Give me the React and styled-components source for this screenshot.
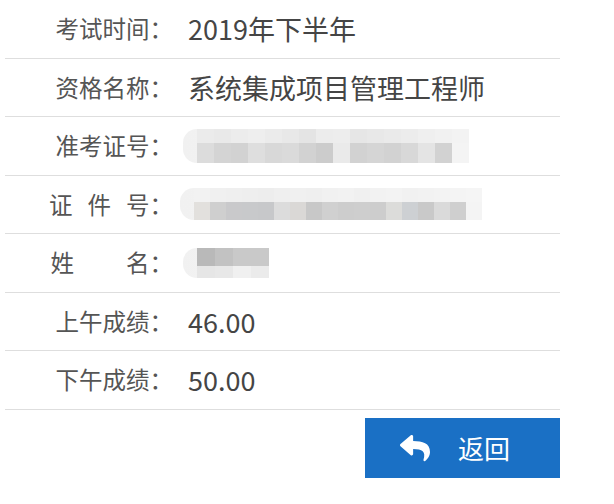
import React from "react";
import styled, { createGlobalStyle } from "styled-components";
import { FaReply } from "react-icons/fa";

const GlobalStyle = createGlobalStyle`
  html, body {
    margin: 0;
    padding: 0;
    background: #ffffff;
  }
  body {
    font-family: "Noto Sans CJK SC", "Noto Sans", sans-serif;
  }
`;

const Page = styled.div`
  width: 614px;
  height: 504px;
  box-sizing: border-box;
  padding-left: 5px;
  overflow: hidden;
`;

const Table = styled.div`
  width: 555px;
  display: flex;
  flex-direction: column;
`;

const Row = styled.div`
  display: flex;
  align-items: center;
  height: 57.5px;
  border-bottom: 1px solid #dedede;
`;

const Label = styled.div`
  width: 168px;
  flex-shrink: 0;
  font-size: 23.5px;
  color: #555555;
  white-space: nowrap;
  display: flex;
  justify-content: flex-end;
  align-items: center;
  line-height: 1;
`;

const Gap = styled.span`
  display: inline-block;
  width: ${(p) => p.$w}px;
`;

const Value = styled.div`
  padding-left: 15px;
  font-size: 27px;
  color: #454545;
  white-space: nowrap;
  line-height: 1;
`;

const Mosaic = styled.div`
  margin-left: ${(p) => p.$offset || 12}px;
  display: flex;
  flex-direction: column;
  border-radius: 14px 0 0 14px;
  overflow: hidden;
  background: linear-gradient(90deg, #f1f1f1, #f6f6f6);
  padding-left: 14px;
`;

const MosaicRow = styled.div`
  display: flex;
  height: ${(p) => p.$h}px;
`;

const Block = styled.div`
  width: ${(p) => p.$w || 16}px;
  height: 100%;
  background: ${(p) => p.$c};
`;

const Footer = styled.div`
  width: 555px;
  display: flex;
  justify-content: flex-end;
  padding-top: 8px;
`;

const BackButton = styled.button`
  width: 195px;
  height: 60px;
  border: none;
  background: #1a70c5;
  color: #ffffff;
  display: flex;
  align-items: center;
  padding: 0 0 0 33px;
  box-sizing: border-box;
  font-family: "Noto Sans CJK SC", "Noto Sans", sans-serif;
  font-size: 26px;
  cursor: pointer;
  gap: 26px;
  svg {
    width: 34px;
    height: 30px;
  }
`;

const topA = ["#ebebeb", "#e9e9e9", "#ececec", "#eeeeee", "#ebebeb", "#e8e8e8", "#e4e4e4", "#ececec", "#ededed", "#e6e6e6", "#e8e8e8", "#eaeaea", "#ececec", "#efefef", "#f1f1f1", "#f3f3f3"];
const botA = ["#dcdcdc", "#d4d4d4", "#d2d2d2", "#dedede", "#d8d8d8", "#dadada", "#d2d2d2", "#cccccc", "#eaeaea", "#d2d2d2", "#d5d5d5", "#d2d2d2", "#d8d8d8", "#e4e4e4", "#d2d2d2", "#f4f4f4"];
const topB = ["#f2f2f2", "#f0f0f0", "#efefef", "#eeeeee", "#ededed", "#efefef", "#f0f0f0", "#efefef", "#f1f1f1", "#f2f2f2", "#f0f0f0", "#f2f2f2", "#f3f3f3", "#f1f1f1", "#f2f2f2", "#f3f3f3", "#f4f4f4", "#f5f5f5"];
const botB = ["#e2e0dd", "#cfcfcf", "#c9c9cb", "#c8c9cb", "#c7c8ca", "#dcdcdc", "#dad8d6", "#c8c8c8", "#d0d0d0", "#cdcdcd", "#cecece", "#cdcdcd", "#dcdcda", "#cdd0d3", "#c9c9c9", "#dadada", "#cfcfcf", "#f4f4f4"];
const topC = ["#b9b9b9", "#c2c2c2", "#c9c9c9", "#c9c9c9"];
const botC = ["#e6e6e6", "#e8e8e8", "#f0f0f0", "#ebebeb"];

function Blur({ top, bottom, topH, botH, offset, w }) {
  return (
    <Mosaic $offset={offset}>
      <MosaicRow $h={topH}>
        {top.map((c, i) => (
          <Block key={i} $c={c} $w={w} />
        ))}
      </MosaicRow>
      <MosaicRow $h={botH}>
        {bottom.map((c, i) => (
          <Block key={i} $c={c} $w={w} />
        ))}
      </MosaicRow>
    </Mosaic>
  );
}

export default function App() {
  return (
    <>
      <GlobalStyle />
      <Page>
        <Table>
          <Row>
            <Label>考试时间：</Label>
            <Value>2019年下半年</Value>
          </Row>
          <Row>
            <Label>资格名称：</Label>
            <Value>系统集成项目管理工程师</Value>
          </Row>
          <Row>
            <Label>准考证号：</Label>
            <Blur top={topA} bottom={botA} topH={14} botH={20} offset={10} w={17} />
          </Row>
          <Row>
            <Label>
              证<Gap $w={15} />件<Gap $w={15} />号：
            </Label>
            <Blur top={topB} bottom={botB} topH={14} botH={18} offset={7} />
          </Row>
          <Row>
            <Label>
              姓<Gap $w={52} />名：
            </Label>
            <Blur top={topC} bottom={botC} topH={18} botH={12} offset={10} w={18} />
          </Row>
          <Row>
            <Label>上午成绩：</Label>
            <Value>46.00</Value>
          </Row>
          <Row>
            <Label>下午成绩：</Label>
            <Value>50.00</Value>
          </Row>
        </Table>
        <Footer>
          <BackButton>
            <FaReply />
            <span>返回</span>
          </BackButton>
        </Footer>
      </Page>
    </>
  );
}
